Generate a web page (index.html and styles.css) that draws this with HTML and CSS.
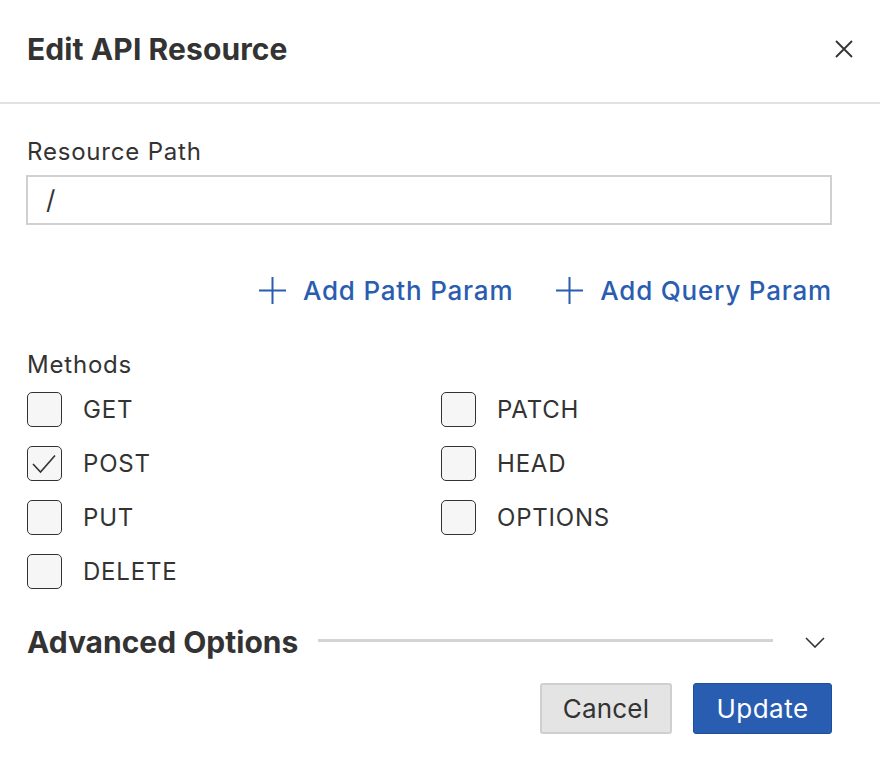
FILE: index.html
```html
<!DOCTYPE html>
<html>
<head>
<meta charset="utf-8">
<link rel="stylesheet" href="styles.css">
</head>
<body>
<div class="dialog">
  <div class="header">
    <h1 class="title">Edit API Resource</h1>
    <button class="close" aria-label="Close">
      <svg width="18" height="18" viewBox="0 0 18 18"><path d="M1 1L17 17M17 1L1 17" stroke="#333" stroke-width="1.8" fill="none"/></svg>
    </button>
  </div>
  <div class="body">
    <label class="label">Resource Path</label>
    <div class="input">/</div>
    <div class="links">
      <a class="link"><svg width="27" height="27" viewBox="0 0 27 27"><path d="M13.5 0V27M0 13.5H27" stroke="#2a5db0" stroke-width="2" fill="none"/></svg><span>Add Path Param</span></a>
      <a class="link"><svg width="27" height="27" viewBox="0 0 27 27"><path d="M13.5 0V27M0 13.5H27" stroke="#2a5db0" stroke-width="2" fill="none"/></svg><span>Add Query Param</span></a>
    </div>
    <div class="label methods-label">Methods</div>
    <div class="methods">
      <div class="col">
        <div class="check"><span class="box"></span>GET</div>
        <div class="check"><span class="box"><svg width="35" height="35" viewBox="0 0 35 35"><path d="M6 18L13.5 26L28 9.5" stroke="#333" stroke-width="1.6" fill="none"/></svg></span>POST</div>
        <div class="check"><span class="box"></span>PUT</div>
        <div class="check"><span class="box"></span>DELETE</div>
      </div>
      <div class="col">
        <div class="check"><span class="box"></span>PATCH</div>
        <div class="check"><span class="box"></span>HEAD</div>
        <div class="check"><span class="box"></span>OPTIONS</div>
      </div>
    </div>
    <div class="advanced">
      <span class="adv-title">Advanced Options</span>
      <span class="adv-line"></span>
      <svg class="chev" width="20" height="11" viewBox="0 0 20 11"><path d="M1 1L10 10L19 1" stroke="#333" stroke-width="1.6" fill="none"/></svg>
    </div>
    <div class="actions">
      <button class="btn cancel">Cancel</button>
      <button class="btn update">Update</button>
    </div>
  </div>
</div>
</body>
</html>
```
FILE: styles.css
```css
* { box-sizing: border-box; }
html, body { margin: 0; padding: 0; background: #fff; }
body { font-family: Inter, "Noto Sans", sans-serif; color: #333; width: 880px; height: 770px; overflow: hidden; }
.dialog { width: 880px; }
.header {
  height: 104px;
  border-bottom: 2px solid #e2e2e2;
  display: flex;
  align-items: center;
  justify-content: space-between;
  padding: 0 26px 4px 27px;
}
.title { margin: 0; font-size: 30px; font-weight: 700; color: #333; letter-spacing: 0.1px; }
.close { border: 0; background: none; padding: 0; width: 18px; height: 18px; margin-right: 1px; }
.close svg { display: block; }
.body { padding: 34px 48px 0 26px; }
.label { display: block; font-size: 24px; color: #333; margin-left: 1px; line-height: 28px; letter-spacing: 0.8px; }
.input {
  margin-top: 9px;
  height: 50px;
  border: 2px solid #d0d0d0;
  padding: 0 18px;
  font-size: 26px;
  line-height: 46px;
  color: #333;
}
.links { display: flex; justify-content: flex-end; gap: 43px; margin-top: 49px; height: 32px; align-items: center; }
.link { display: flex; align-items: center; gap: 17px; color: #2a5db0; font-size: 26px; font-weight: 500; letter-spacing: 0.8px; text-decoration: none; }
.link svg { display: block; }
.methods-label { margin-top: 45px; }
.methods { display: grid; grid-template-columns: 414px 1fr; margin-top: 13px; }
.col { display: flex; flex-direction: column; gap: 19px; }
.check { display: flex; align-items: center; gap: 21px; height: 35px; font-size: 24px; letter-spacing: 0.8px; color: #333; margin-left: 1px; }
.box { flex: none; width: 35px; height: 35px; border: 1.5px solid #333; border-radius: 5px; background: #f6f6f6; display: block; position: relative; }
.box svg { position: absolute; left: -1.5px; top: -1.5px; }
.advanced { display: flex; align-items: center; margin-top: 35px; height: 36px; }
.adv-title { font-size: 30px; font-weight: 700; color: #333; margin-left: 1px; }
.adv-line { width: 455px; height: 3px; background: #d4d4d4; margin-left: 20px; margin-top: -3px; }
.chev { margin-left: 32px; }
.actions { display: flex; justify-content: flex-end; gap: 21px; margin-top: 23px; }
.btn { height: 51px; font-family: Inter, "Noto Sans", sans-serif; font-size: 26px; border-radius: 3px; padding: 0; letter-spacing: 0.2px; }
.cancel { width: 132px; background: #e4e4e4; border: 2px solid #cfcfcf; color: #333; }
.update { width: 139px; background: #285db2; border: 1px solid #1f4f9c; color: #fff; letter-spacing: 0.5px; }
```
